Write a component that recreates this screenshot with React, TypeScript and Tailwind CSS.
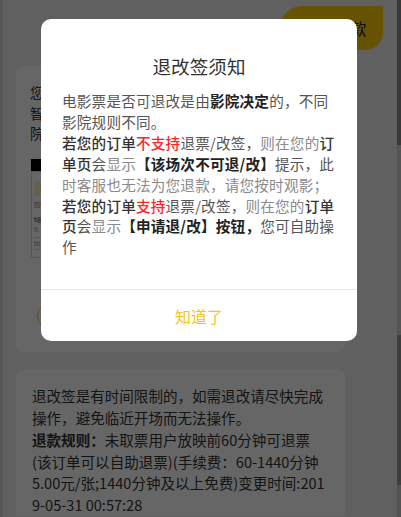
import React from "react";

type Seg = [string, string];

const D = "text-[#333333] font-medium";
const M = "text-[#555555]";
const L = "text-[#8a8a8a]";
const B = "text-[#222222] font-bold";
const R = "text-[#ff2626] font-medium";

const modalLines: Seg[][] = [
  [[M, "电影票是否可退改是由"], [B, "影院决定"], [M, "的，不同"]],
  [[M, "影院规则不同。"]],
  [[D, "若您的订单"], [R, "不支持"], [M, "退票/改签，"], [L, "则在您的"], [D, "订"]],
  [[D, "单页"], [M, "会"], [L, "显示"], [B, "【该场次不可退/改】"], [M, "提示，此"]],
  [[L, "时客服也无法为您退款，请您按时观影；"]],
  [[D, "若您的订单"], [R, "支持"], [M, "退票/改签，"], [L, "则在您的"], [D, "订单"]],
  [[D, "页"], [M, "会"], [L, "显示"], [B, "【申请退/改】按钮，"], [M, "您可自助操"]],
  [[M, "作"]],
];

const bottomLines: Seg[][] = [
  [["", "退改签是有时间限制的，如需退改请尽快完成"]],
  [["", "操作，避免临近开场而无法操作。"]],
  [["font-bold", "退款规则："], ["", "未取票用户放映前60分钟可退票"]],
  [["", "(该订单可以自助退票)(手续费：60-1440分钟"]],
  [["", "5.00元/张;1440分钟及以上免费)变更时间:201"]],
  [["", "9-05-31 00:57:28"]],
];

export default function App() {
  return (
    <div className="relative h-[517px] w-[401px] overflow-hidden bg-[#f0f0f0] font-['Noto_Sans_CJK_SC','Noto_Sans',sans-serif]">
      <div className="flex h-full">
        <div className="w-[3px] bg-[#d6d6d6]" />
        <div className="flex flex-1 flex-col">
          <div className="flex justify-end pr-[14px] pt-[6px]">
            <div className="flex h-[44px] w-[103px] items-center justify-center rounded-bl-[22px] rounded-br-[18px] rounded-tl-[22px] rounded-tr-[3px] bg-[#ffcc00] pl-[6px] text-[16px] text-[#222]">
              申请退款
            </div>
          </div>
          <div className="ml-[12px] mt-[15px] h-[290px] w-[331px] rounded-[10px] border border-[#f3f3f3] bg-white px-[14px] pt-[16px]">
            <div className="text-[14px] leading-[20.5px] tracking-[1px] text-[#333]">
              <div className="whitespace-nowrap">您的</div>
              <div className="whitespace-nowrap">智能</div>
              <div className="whitespace-nowrap">院工</div>
            </div>
            <div className="ml-[1px] mt-[15px] w-[280px]">
              <div className="h-[12px] bg-black" />
              <div className="h-[87px] border border-[#d8d8d8] px-[2px] pt-[9px] text-[6px] leading-[10px] text-[#888]">
                <div className="h-[15px] w-[40px] bg-[#fff1c2]" />
                <div className="mt-[4px]">回UT</div>
                <div className="mt-[5px] font-bold text-[#555]">t@</div>
                <div>9: 1:00</div>
                <div className="mt-[2px] border-t border-[#e9d9a0] pt-[1px]">ttl</div>
                <div className="border-b border-[#e9d9a0]" />
              </div>
            </div>
            <div className="ml-[7px] mt-[46px] h-[24px] w-[24px] rounded-full border-[1.5px] border-[#f7c600]" />
          </div>
          <div className="ml-[12px] mt-[15px] w-[331px] flex-1 rounded-t-[10px] border border-[#f3f3f3] bg-white px-[16px] pt-[16px] text-[14.55px] leading-[21.8px] text-[#333]">
            {bottomLines.map((line, i) => (
              <div key={i} className="whitespace-nowrap">
                {line.map(([c, t], j) => (
                  <span key={j} className={c}>
                    {t}
                  </span>
                ))}
              </div>
            ))}
          </div>
        </div>
        <div className="flex w-[4px] flex-col">
          <div className="h-[145px] bg-[#8c8c8c]" />
          <div className="h-[190px] bg-[#d4d4d4]" />
          <div className="h-[150px] bg-[#9a9a9a]" />
          <div className="flex-1 bg-[#cfcfcf]" />
        </div>
      </div>

      <div className="absolute inset-0 bg-black/60">
        <div className="absolute left-[41px] top-[19px] flex h-[322px] w-[316px] flex-col rounded-[10px] bg-white">
          <div className="flex-1">
            <div className="pt-[34px] text-center text-[18.6px] leading-[26px] text-[#333]">退改签须知</div>
            <div className="mt-[12px] pl-[21px] text-[14.6px] leading-[20.9px] tracking-[0.2px]">
              {modalLines.map((line, i) => (
                <div key={i} className="whitespace-nowrap">
                  {line.map(([c, t], j) => (
                    <span key={j} className={c}>
                      {t}
                    </span>
                  ))}
                </div>
              ))}
            </div>
          </div>
          <div className="flex h-[52px] items-center justify-center border-t border-[#e8e8e8] text-[16px] text-[#f7c31c]">
            知道了
          </div>
        </div>
      </div>
    </div>
  );
}
